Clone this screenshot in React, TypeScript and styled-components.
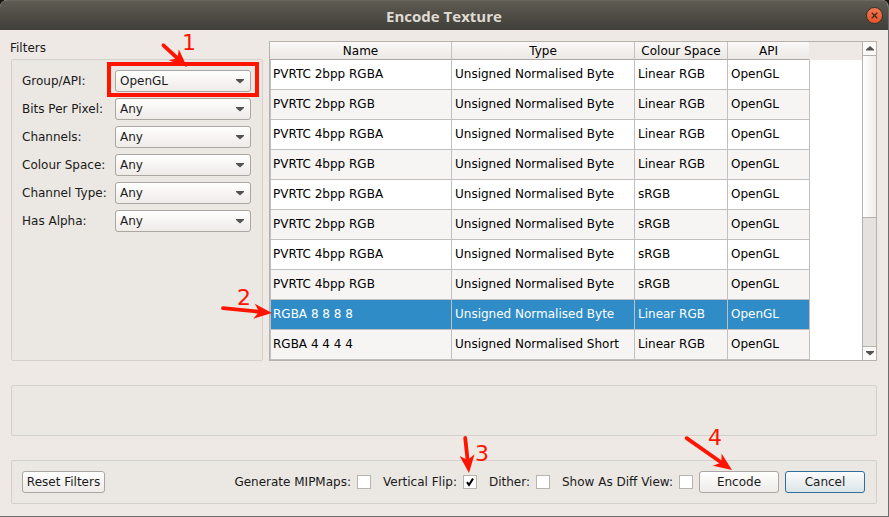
import React, { useState } from "react";
import styled, { createGlobalStyle, css } from "styled-components";

const GlobalStyle = createGlobalStyle`
  * { box-sizing: border-box; }
  body {
    margin: 0;
    background: #17130f;
    color: #1a1a1a;
    font: 12px/14px "DejaVu Sans", sans-serif;
  }
  button, select, input { font: inherit; color: inherit; margin: 0; }
`;

const Dialog = styled.main`
  display: flex;
  flex-direction: column;
  min-height: 100vh;
  background: #eee9e5;
  border-right: 1px solid #6d6d6d;
  border-bottom: 1px solid #6d6d6d;
  border-radius: 7px 7px 0 0;
  overflow: hidden;
`;

const TitleBar = styled.header`
  display: grid;
  grid-template-columns: 24px 1fr 24px;
  align-items: center;
  height: 30px;
  padding: 0 2px;
  background: linear-gradient(#5e5b52, #403e39);
  border-top: 1px solid #6b685f;
`;

const Title = styled.h1`
  grid-column: 2;
  margin: 0;
  text-align: center;
  color: #dfdbd2;
  font: 700 15px/18px "Open Sans", sans-serif;
`;

const CloseButton = styled.button`
  display: grid;
  place-items: center;
  width: 17px;
  height: 17px;
  justify-self: center;
  padding: 0;
  border: 1px solid #35332f;
  border-radius: 50%;
  background: linear-gradient(#f47952, #e75427);
  color: #40291f;
`;

const Content = styled.div`
  flex: 1;
  display: flex;
  flex-direction: column;
  gap: 24px;
  padding: 11px 11px 12px;
`;

const Workspace = styled.div`
  flex: 1;
  display: flex;
  gap: 6px;
`;

const Sidebar = styled.section`
  display: flex;
  flex-direction: column;
  flex: 0 0 252px;
`;

const SectionTitle = styled.h2`
  margin: 0 0 4px -1px;
  font-size: 12px;
  line-height: 14px;
  font-weight: normal;
`;

const panel = css`
  background: #ebe7e2;
  border: 1px solid #d4d0cc;
  border-radius: 2px;
`;

const FilterPanel = styled.div`
  ${panel}
  flex: 1;
  display: flex;
  flex-direction: column;
  gap: 6px;
  padding: 10px 11px 10px 10px;
`;

const FilterRow = styled.div`
  display: flex;
  justify-content: space-between;
  align-items: center;
`;

const SelectBox = styled.div`
  position: relative;
  width: 136px;

  & > svg {
    position: absolute;
    right: 7px;
    top: 9px;
    pointer-events: none;
  }
`;

const control = css`
  height: 22px;
  border: 1px solid #aaa6a2;
  border-radius: 3px;
  background: linear-gradient(#ffffff, #eeebe8);
`;

const Select = styled.select`
  ${control}
  display: block;
  width: 100%;
  padding: 0 20px 0 4px;
  appearance: none;
`;

const Highlight = styled.div`
  position: absolute;
  inset: -8px -8px -5px -8px;
  border: 4px solid #ff1400;
  pointer-events: none;
`;

const MessagePanel = styled.div`
  ${panel}
  height: 51px;
`;

const TableFrame = styled.div`
  flex: 1;
  position: relative;
  display: flex;
  min-width: 0;
  border: 1px solid #b5b2ae;
  background: #ffffff;
`;

const TableArea = styled.div`
  flex: 1;
  background: linear-gradient(#eee9e5, #eee9e5) top / 100% 18px no-repeat;
`;

const Table = styled.table`
  width: 540px;
  table-layout: fixed;
  border-collapse: separate;
  border-spacing: 0;
  color: #000000;
`;

const HeadCell = styled.th`
  height: 18px;
  padding: 0;
  font-weight: normal;
  background: linear-gradient(#fbf9f7, #ebe8e5);
  border-right: 1px solid #c5c2be;
  border-bottom: 1px solid #aaa7a4;

  &:last-child { border-right-color: #ebe8e5; }
`;

const Row = styled.tr<{ $selected: boolean }>`
  background: #ffffff;
  &:nth-child(even) { background: #f6f5f4; }
  ${(p) => p.$selected && css`
    && { background: #308cc6; color: #ffffff; }
  `}
`;

const Cell = styled.td`
  height: 30px;
  padding: 0 0 2px 3px;
  border-right: 1px solid #c0c0c0;
  border-bottom: 1px solid #c0c0c0;
  white-space: nowrap;

  &:first-child { border-left: 1px solid #c0c0c0; padding-left: 2px; }
`;

const ScrollBar = styled.div`
  display: flex;
  flex-direction: column;
  width: 14px;
  background: #e5e1de;
  border-left: 1px solid #b5b2ae;
`;

const ScrollButton = styled.button`
  display: grid;
  place-items: center;
  height: 14px;
  padding: 0;
  border: 0 solid #b5b2ae;
  border-width: ${(p) => (p["aria-label"] === "Scroll up" ? "0 0 1px" : "1px 0 0")};
  background: #fbfaf9;
`;

const ScrollTrack = styled.div`
  flex: 1;
`;

const ScrollThumb = styled.div`
  height: 56%;
  background: linear-gradient(90deg, #ffffff, #efedea);
  border-bottom: 1px solid #b5b2ae;
`;

const Footer = styled.footer`
  ${panel}
  display: flex;
  align-items: center;
  gap: 6px;
  padding: 10px 11px 10px 10px;
`;

const Button = styled.button<{ $primary?: boolean; $fit?: boolean }>`
  ${control}
  width: ${(p) => (p.$fit ? "83px" : "80px")};
  padding: 0;
  white-space: nowrap;
  ${(p) => p.$primary && css`
    border-color: #2f6f9c;
    background: linear-gradient(#fafbfb, #dce4e8);
  `}
`;

const Options = styled.div`
  flex: 1;
  display: flex;
  justify-content: flex-end;
  gap: 12px;
`;

const Option = styled.label`
  display: flex;
  align-items: center;
  gap: 6px;
`;

const Anchor = styled.span`
  position: relative;
  display: flex;
`;

const CheckBox = styled.input`
  appearance: none;
  width: 14px;
  height: 14px;
  border: 1px solid #b6b3b0;
  background: #ffffff;
`;

const Tick = styled.svg`
  position: absolute;
  inset: 0;
  pointer-events: none;
`;

const MarkerSvg = styled.svg<{ $x: number; $y: number }>`
  && {
    position: absolute;
    left: ${(p) => p.$x}px;
    top: ${(p) => p.$y}px;
    right: auto;
    width: 1px;
    height: 1px;
    overflow: visible;
    pointer-events: none;
    z-index: 2;
  }
`;

type MarkerProps = {
  x: number;
  y: number;
  tail: [number, number];
  label: string;
  labelAt: [number, number];
};

/* A numbered arrow whose tip sits at (x, y) of its positioned parent. */
function Marker({ x, y, tail, label, labelAt }: MarkerProps) {
  const angle = (Math.atan2(-tail[1], -tail[0]) * 180) / Math.PI;
  const length = Math.hypot(tail[0], tail[1]);
  return (
    <MarkerSvg $x={x} $y={y} fill="#ff1400">
      <g transform={`rotate(${angle})`}>
        <path d={`M${2 - length} 0H-10`} stroke="#ff1400" strokeWidth="3.8" strokeLinecap="round" />
        <path d="M0 0L-18 -7.5L-13 0L-18 7.5Z" />
      </g>
      <text x={labelAt[0]} y={labelAt[1]} fontSize="22">{label}</text>
    </MarkerSvg>
  );
}

const Triangle = ({ up = false }: { up?: boolean }) => (
  <svg width="8" height="5" viewBox="0 0 8 5" fill="#555351" aria-hidden="true">
    <path d={up ? "M0 4.5V3.5L4 0L8 3.5V4.5Z" : "M0 0H8V1L4 4.5L0 1Z"} />
  </svg>
);

const filters = [
  ["Group/API:", "OpenGL"],
  ["Bits Per Pixel:", "Any"],
  ["Channels:", "Any"],
  ["Colour Space:", "Any"],
  ["Channel Type:", "Any"],
  ["Has Alpha:", "Any"],
];

const columns: [string, number][] = [
  ["Name", 182],
  ["Type", 183],
  ["Colour Space", 93],
  ["API", 82],
];

const BYTE = "Unsigned Normalised Byte";
const formats = [
  ["PVRTC 2bpp RGBA", BYTE, "Linear RGB"],
  ["PVRTC 2bpp RGB", BYTE, "Linear RGB"],
  ["PVRTC 4bpp RGBA", BYTE, "Linear RGB"],
  ["PVRTC 4bpp RGB", BYTE, "Linear RGB"],
  ["PVRTC 2bpp RGBA", BYTE, "sRGB"],
  ["PVRTC 2bpp RGB", BYTE, "sRGB"],
  ["PVRTC 4bpp RGBA", BYTE, "sRGB"],
  ["PVRTC 4bpp RGB", BYTE, "sRGB"],
  ["RGBA 8 8 8 8", BYTE, "Linear RGB"],
  ["RGBA 4 4 4 4", "Unsigned Normalised Short", "Linear RGB"],
];

const optionNames = ["Generate MIPMaps:", "Vertical Flip:", "Dither:", "Show As Diff View:"];

export default function App() {
  const [selected, setSelected] = useState(8);
  const [checked, setChecked] = useState([false, true, false, false]);

  return (
    <>
      <GlobalStyle />
      <Dialog>
        <TitleBar>
          <Title>Encode Texture</Title>
          <CloseButton aria-label="Close">
            <svg width="7" height="7" viewBox="0 0 7 7" stroke="currentColor" strokeWidth="1.3">
              <path d="M.7.7L6.3 6.3M6.3.7L.7 6.3" />
            </svg>
          </CloseButton>
        </TitleBar>
        <Content>
          <Workspace>
            <Sidebar>
              <SectionTitle>Filters</SectionTitle>
              <FilterPanel>
                {filters.map(([name, value], i) => (
                  <FilterRow key={name}>
                    <label htmlFor={`filter-${i}`}>{name}</label>
                    <SelectBox>
                      <Select id={`filter-${i}`} defaultValue={value}>
                        <option>{value}</option>
                      </Select>
                      <Triangle />
                      {i === 0 && (
                        <>
                          <Highlight />
                          <Marker x={72} y={-3} tail={[-25, -23]} label="1" labelAt={[-5, -17]} />
                        </>
                      )}
                    </SelectBox>
                  </FilterRow>
                ))}
              </FilterPanel>
            </Sidebar>
            <TableFrame>
              <TableArea>
                <Table>
                  <colgroup>
                    {columns.map(([name, width]) => <col key={name} width={width} />)}
                  </colgroup>
                  <thead>
                    <tr>{columns.map(([name]) => <HeadCell key={name}>{name}</HeadCell>)}</tr>
                  </thead>
                  <tbody>
                    {formats.map((format, i) => (
                      <Row key={i} $selected={i === selected} onClick={() => setSelected(i)}>
                        {format.map((text, j) => <Cell key={j}>{text}</Cell>)}
                        <Cell>OpenGL</Cell>
                      </Row>
                    ))}
                  </tbody>
                </Table>
              </TableArea>
              <ScrollBar>
                <ScrollButton aria-label="Scroll up"><Triangle up /></ScrollButton>
                <ScrollTrack><ScrollThumb /></ScrollTrack>
                <ScrollButton aria-label="Scroll down"><Triangle /></ScrollButton>
              </ScrollBar>
              <Marker x={2} y={271} tail={[-51, -5]} label="2" labelAt={[-35, -8]} />
            </TableFrame>
          </Workspace>
          <MessagePanel />
          <Footer>
            <Button $fit>Reset Filters</Button>
            <Options>
              {optionNames.map((name, i) => (
                <Option key={name}>
                  {name}
                  <Anchor>
                    <CheckBox
                      type="checkbox"
                      checked={checked[i]}
                      onChange={() => setChecked(checked.map((c, k) => (k === i ? !c : c)))}
                    />
                    {checked[i] && (
                      <Tick width="14" height="14" viewBox="0 0 14 14" fill="none" stroke="#000" strokeWidth="2">
                        <path d="M4 7.2L6 10L10 3.6" />
                      </Tick>
                    )}
                    {i === 1 && <Marker x={6} y={-2} tail={[-4, -37]} label="3" labelAt={[6, -12]} />}
                  </Anchor>
                </Option>
              ))}
            </Options>
            <Anchor>
              <Button>Encode</Button>
              <Marker x={33} y={-1} tail={[-47, -33]} label="4" labelAt={[-24, -25]} />
            </Anchor>
            <Button $primary>Cancel</Button>
          </Footer>
        </Content>
      </Dialog>
    </>
  );
}
